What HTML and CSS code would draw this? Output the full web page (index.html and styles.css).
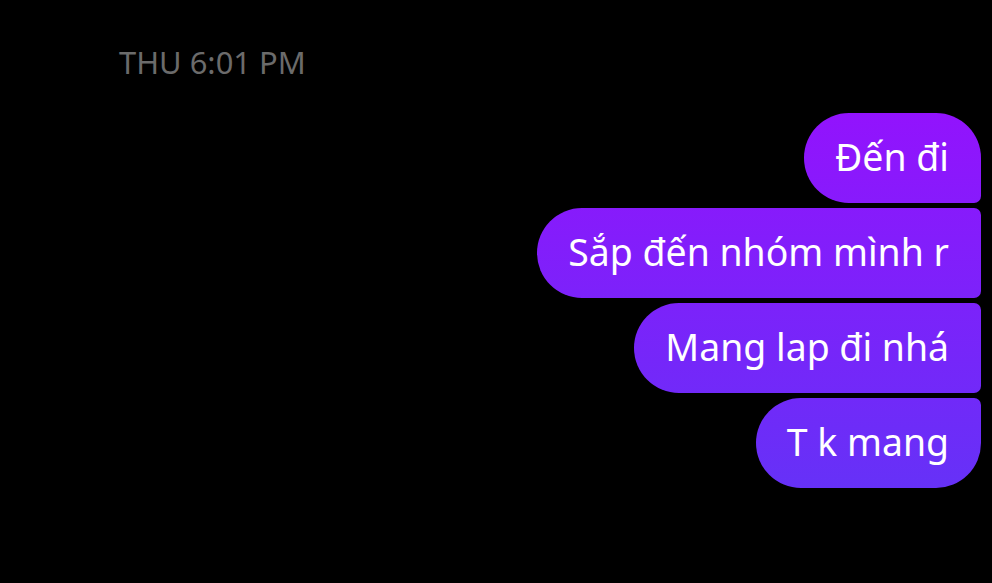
FILE: index.html
```html
<!DOCTYPE html>
<html lang="vi">
<head>
<meta charset="utf-8">
<link rel="stylesheet" href="styles.css">
</head>
<body>
<div class="chat">
  <div class="stamp">THU 6:01 PM</div>
  <div class="thread">
    <div class="bubble first">Đến đi</div>
    <div class="bubble mid">Sắp đến nhóm mình r</div>
    <div class="bubble mid">Mang lap đi nhá</div>
    <div class="bubble last">T k mang</div>
  </div>
</div>
</body>
</html>
```
FILE: styles.css
```css
html, body {
  margin: 0;
  padding: 0;
  background: #000;
  height: 100%;
}
.chat {
  font-family: "Noto Sans", "Open Sans", sans-serif;
  padding-top: 42px;
}
.stamp {
  padding-left: 119px;
  color: #6b6b6b;
  font-size: 30.9px;
  line-height: 40px;
  height: 40px;
}
.thread {
  margin-top: 31px;
  display: flex;
  flex-direction: column;
  align-items: flex-end;
  gap: 5px;
  padding-right: 11px;
}
.bubble {
  height: 90px;
  box-sizing: border-box;
  line-height: 88px;
  padding: 0 32px 2px 31px;
  color: #fff;
  font-size: 37.4px;
  white-space: nowrap;
  background: linear-gradient(180deg, #9412fd 0px, #9213fd 113px, #6631f7 488px, #6034f6 583px);
  background-attachment: fixed;
  border-radius: 45px 7px 7px 45px;
}
.bubble.first {
  border-radius: 45px 45px 7px 45px;
}
.bubble.last {
  border-radius: 45px 7px 45px 45px;
}
```
